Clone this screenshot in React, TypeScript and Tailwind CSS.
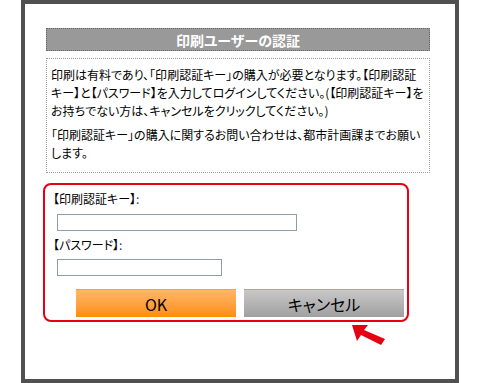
export default function App() {
  const jp = { fontFamily: '"Noto Sans CJK JP", "Noto Sans", sans-serif', fontFeatureSettings: '"palt"' };

  return (
    <div className="relative w-[480px] h-[383px] bg-white pl-[21px]" style={jp}>
      <div className="w-[438px] h-[383px] border-[4px] border-[#505050] bg-white pt-[24px]">
        {/* title bar */}
        <div className="ml-[21px] w-[384px] h-[23px] bg-[#999999] border border-dotted border-[#666666] flex items-center justify-center text-white text-[14px] font-bold leading-none">
          印刷ユーザーの認証
        </div>

        {/* info text */}
        <div className="ml-[21px] mt-[7px] w-[384px] h-[115px] border border-dotted border-[#a0a0a0] px-[4px] pt-[7px] text-[12px] leading-[18px] text-black whitespace-nowrap">
          <p>
            印刷は有料であり、「印刷認証キー」の購入が必要となります。【印刷認証
            <br />
            キー】と【パスワード】を入力してログインしてください。(【印刷認証キー】を
            <br />
            お持ちでない方は、キャンセルをクリックしてください。)
          </p>
          <p className="mt-[6px]">
            「印刷認証キー」の購入に関するお問い合わせは、都市計画課までお願い
            <br />
            します。
          </p>
        </div>

        {/* login form */}
        <div className="ml-[18px] mt-[10px] w-[366px] h-[139px] border-[2px] border-[#e60012] rounded-[8px] pl-[8px] pt-[5px]">
          <div className="text-[12px] leading-[18px] text-black">
            【印刷認証キー】<span className="text-[#333366]">:</span>
          </div>
          <div className="ml-[4px] mt-[6px] w-[240px] h-[17px] border border-[#8a9fa8] bg-white" />
          <div className="mt-[5px] text-[12px] leading-[18px] text-black">
            【パスワード】<span className="text-[#333366]">:</span>
          </div>
          <div className="ml-[4px] mt-[5px] w-[165px] h-[17px] border border-[#8a9fa8] bg-white" />
          <div className="ml-[23px] mt-[13px] flex gap-[8px]">
            <div className="w-[160px] h-[28px] border-t border-[#ffa030] bg-gradient-to-b from-[#ffb864] to-[#ff8c00] flex items-center justify-center text-[16px] text-black">
              OK
            </div>
            <div className="w-[160px] h-[28px] border-t border-[#b4a496] bg-gradient-to-b from-[#c8c8c8] to-[#a0a0a0] flex items-center justify-center text-[16px] text-black">
              キャンセル
            </div>
          </div>
        </div>
      </div>

      {/* pointer arrow */}
      <svg className="absolute left-[350px] top-[322px]" width="36" height="24" viewBox="0 0 36 24">
        <polygon points="2,3 18,3 14,8 35,17 31,23 11,13 7,19" fill="#e60012" />
      </svg>
    </div>
  );
}
